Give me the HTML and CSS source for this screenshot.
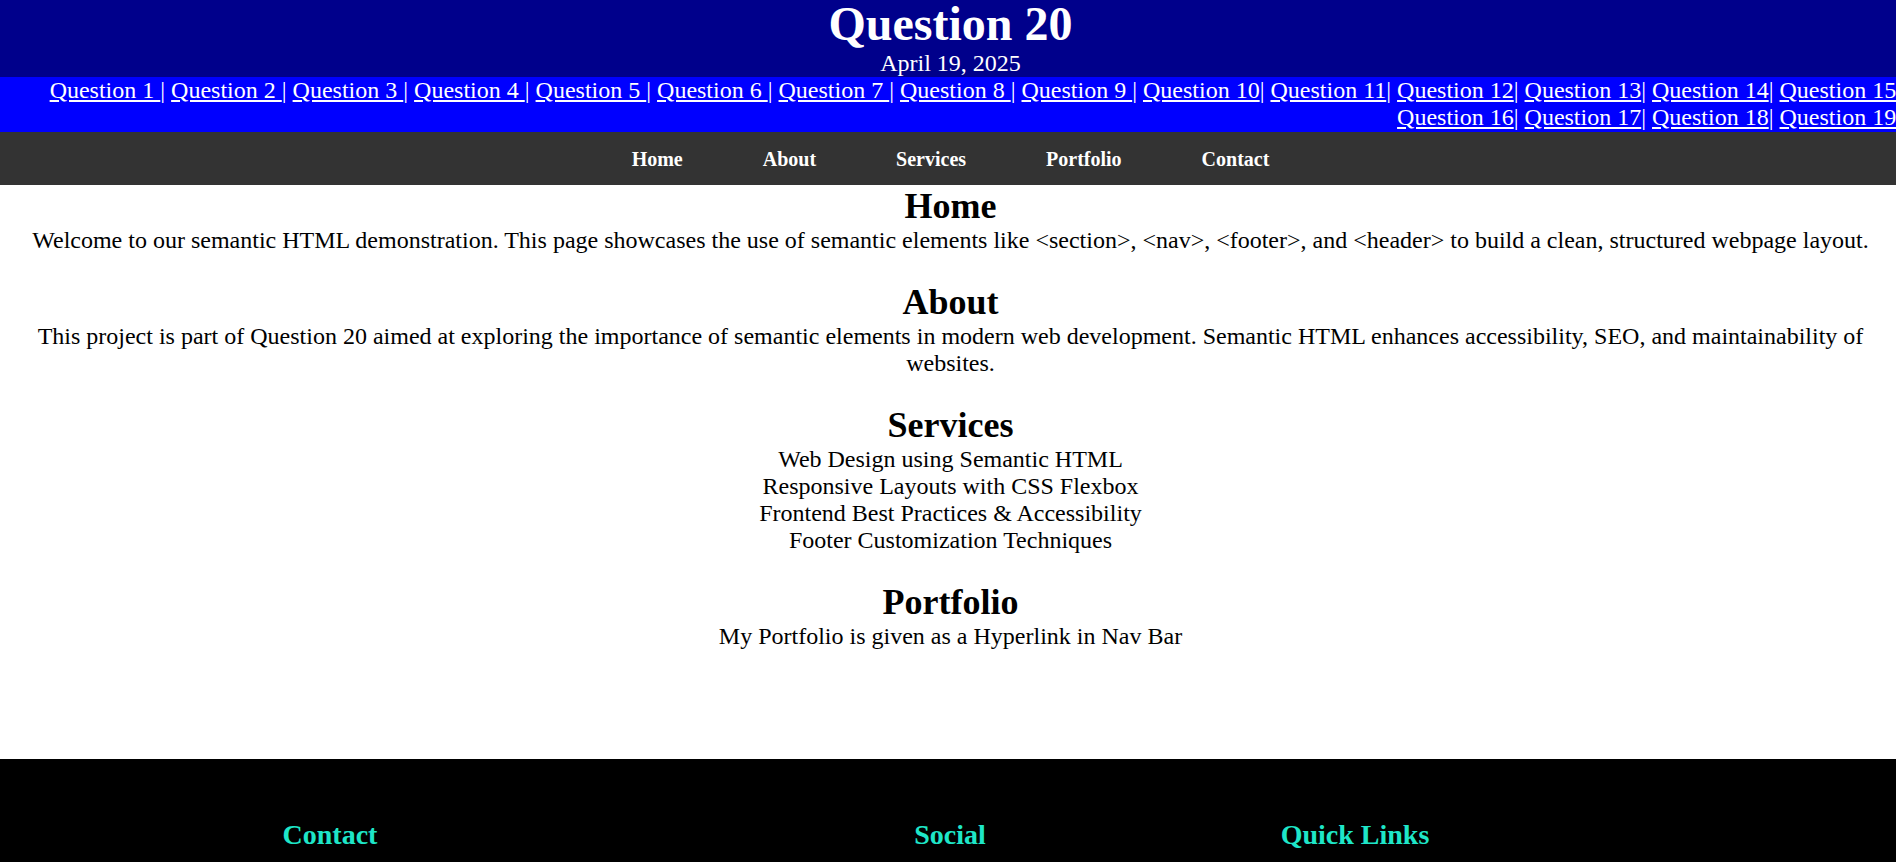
FILE: index.html
```html
<!DOCTYPE html>
<html lang="en">
<head>
<meta charset="utf-8">
<title>Question 20</title>
<link rel="stylesheet" href="styles.css">
</head>
<body>
<header class="site-header">
  <h1 class="title">Question 20</h1>
  <p class="date">April 19, 2025</p>
</header>
<div class="qlinks"><a href="#">Question 1 </a>| <a href="#">Question 2 </a>| <a href="#">Question 3 </a>| <a href="#">Question 4 </a>| <a href="#">Question 5 </a>| <a href="#">Question 6 </a>| <a href="#">Question 7 </a>| <a href="#">Question 8 </a>| <a href="#">Question 9 </a>| <a href="#">Question 10</a>| <a href="#">Question 11</a>| <a href="#">Question 12</a>| <a href="#">Question 13</a>| <a href="#">Question 14</a>| <a href="#">Question 15</a>| <a href="#">Question 16</a>| <a href="#">Question 17</a>| <a href="#">Question 18</a>| <a href="#">Question 19</a>|</div>
<nav class="mainnav">
  <a href="#home">Home</a>
  <a href="#about">About</a>
  <a href="#services">Services</a>
  <a href="#portfolio">Portfolio</a>
  <a href="#contact">Contact</a>
</nav>
<main class="content">
  <section class="block" id="home">
    <h2>Home</h2>
    <p>Welcome to our semantic HTML demonstration. This page showcases the use of semantic elements like &lt;section&gt;, &lt;nav&gt;, &lt;footer&gt;, and &lt;header&gt; to build a clean, structured webpage layout.</p>
  </section>
  <section class="block" id="about">
    <h2>About</h2>
    <p>This project is part of Question 20 aimed at exploring the importance of semantic elements in modern web development. Semantic HTML enhances accessibility, SEO, and maintainability of websites.</p>
  </section>
  <section class="block" id="services">
    <h2>Services</h2>
    <ul class="services">
      <li>Web Design using Semantic HTML</li>
      <li>Responsive Layouts with CSS Flexbox</li>
      <li>Frontend Best Practices &amp; Accessibility</li>
      <li>Footer Customization Techniques</li>
    </ul>
  </section>
  <section class="block" id="portfolio">
    <h2>Portfolio</h2>
    <p>My Portfolio is given as a Hyperlink in Nav Bar</p>
  </section>
</main>
<footer class="site-footer" id="contact">
  <div class="fcol"><h3>Contact</h3></div>
  <div class="fcol"><h3>Social</h3></div>
  <div class="fcol"><h3>Quick Links</h3></div>
</footer>
</body>
</html>
```
FILE: styles.css
```css
html {
  overflow-x: hidden;
  scrollbar-width: none;
}
html::-webkit-scrollbar { display: none; }

body {
  margin: 0;
  width: 1901px;
  font-family: "Liberation Serif", "Times New Roman", serif;
  color: #000;
  background: #fff;
}

.site-header {
  background: #00008b;
  color: #fff;
  text-align: center;
}

.title {
  margin: 0 0 2px;
  font-size: 48px;
  line-height: 1;
  font-weight: bold;
}

.date {
  margin: 0;
  font-size: 24px;
}

.qlinks {
  background: #0000ff;
  color: #fff;
  text-align: right;
  font-size: 24px;
  padding-bottom: 1px;
}

.qlinks a {
  color: #fff;
  text-decoration: underline;
}

.mainnav {
  background: #333;
  display: flex;
  justify-content: center;
  gap: 80px;
  padding: 16px 0 14px;
}

.mainnav a {
  color: #fff;
  font-weight: bold;
  font-size: 20px;
  text-decoration: none;
}

.content {
  text-align: center;
  padding-bottom: 82px;
}

.block {
  margin-bottom: 27px;
}

.block h2 {
  margin: 0;
  font-size: 36px;
  font-weight: bold;
}

.block p {
  margin: 0;
  font-size: 24px;
}

.services {
  list-style: none;
  margin: 0;
  padding: 0;
  font-size: 24px;
}

.site-footer {
  background: #000;
  color: #fff;
  display: grid;
  grid-template-columns: 660px 580px 230px 1fr;
  text-align: center;
  padding: 32px 0 40px;
  font-size: 24px;
}

.fcol h3 {
  margin: 28px 0;
  color: #1ee6c8;
  font-size: 28px;
  font-weight: bold;
}
```
